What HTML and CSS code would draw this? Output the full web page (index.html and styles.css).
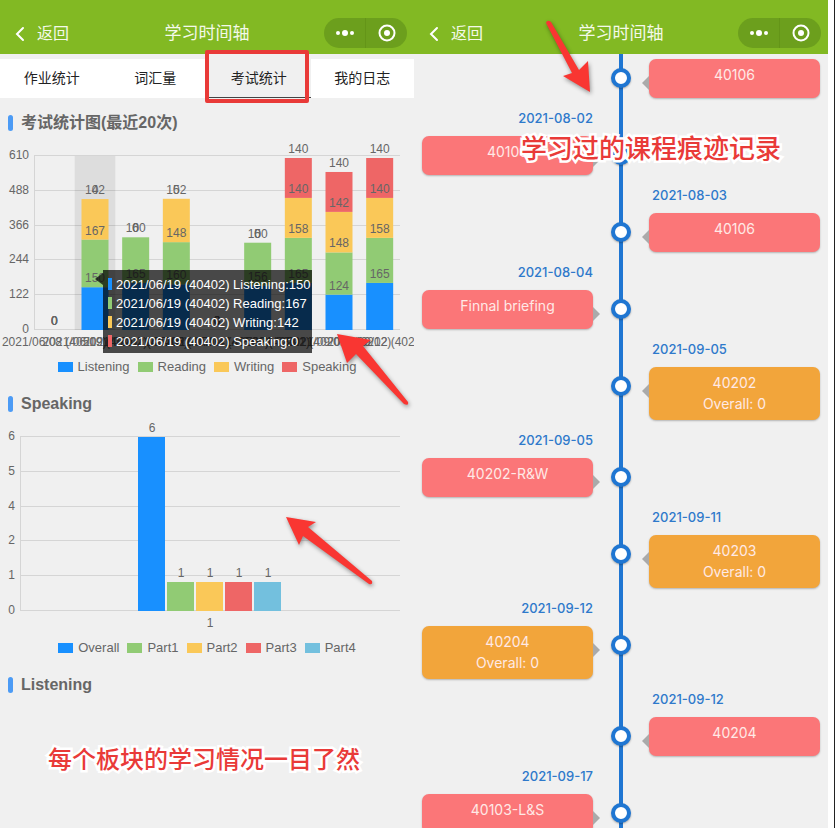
FILE: index.html
```html
<!DOCTYPE html>
<html lang="zh-CN">

<head>
    <meta charset="UTF-8">
    <meta name="viewport" content="width=device-width, initial-scale=1.0">
    <title>学习时间轴</title>
    <link rel="stylesheet" href="styles.css">
</head>

<body>
    <main class="phones">
        <!-- Statistics -->
        <section class="phone">
            <header class="navbar">
                <a class="back" href="#">
                    <svg width="10" height="16" viewBox="0 0 10 16"><path d="M8 2L2 8l6 6" /></svg>
                    返回
                </a>
                <h1>学习时间轴</h1>
                <div class="capsule">
                    <button type="button" aria-label="更多">
                        <svg width="20" height="8" viewBox="0 0 20 8"><circle cx="3" cy="4" r="2" /><circle cx="10" cy="4" r="3" /><circle cx="17" cy="4" r="2" /></svg>
                    </button>
                    <button type="button" aria-label="关闭">
                        <svg width="18" height="18" viewBox="0 0 18 18"><circle class="ring" cx="9" cy="9" r="7.5" /><circle cx="9" cy="9" r="3" /></svg>
                    </button>
                </div>
            </header>

            <nav class="tabs">
                <button type="button">作业统计</button>
                <button type="button">词汇量</button>
                <button type="button" class="active">考试统计</button>
                <button type="button">我的日志</button>
            </nav>

            <h2>考试统计图(最近20次)</h2>
            <svg class="chart" id="examChart" viewBox="0 0 414 214"></svg>
            <ul class="legend">
                <li class="blue">Listening</li>
                <li class="green">Reading</li>
                <li class="yellow">Writing</li>
                <li class="red">Speaking</li>
            </ul>

            <h2>Speaking</h2>
            <svg class="chart" id="speakingChart" viewBox="0 0 414 214"></svg>
            <ul class="legend">
                <li class="blue">Overall</li>
                <li class="green">Part1</li>
                <li class="yellow">Part2</li>
                <li class="red">Part3</li>
                <li class="cyan">Part4</li>
            </ul>

            <h2>Listening</h2>

            <!-- Notes over the screen -->
            <div class="mark-box"></div>
            <svg class="arrow arrow-exam" width="76" height="76" viewBox="0 0 76 76"><path d="M3 3L37 9L29 15L74 71Q75 75 70 73L22 23L13 32Z" /></svg>
            <svg class="arrow arrow-speaking" width="92" height="72" viewBox="0 0 92 72"><path d="M3 3L33 8L25 13L89 67Q90 71 86 70L20 22L16 31Z" /></svg>
            <p class="note note-stats">每个板块的学习情况一目了然</p>
        </section>

        <!-- Timeline -->
        <section class="phone">
            <header class="navbar">
                <a class="back" href="#">
                    <svg width="10" height="16" viewBox="0 0 10 16"><path d="M8 2L2 8l6 6" /></svg>
                    返回
                </a>
                <h1>学习时间轴</h1>
                <div class="capsule">
                    <button type="button" aria-label="更多">
                        <svg width="20" height="8" viewBox="0 0 20 8"><circle cx="3" cy="4" r="2" /><circle cx="10" cy="4" r="3" /><circle cx="17" cy="4" r="2" /></svg>
                    </button>
                    <button type="button" aria-label="关闭">
                        <svg width="18" height="18" viewBox="0 0 18 18"><circle class="ring" cx="9" cy="9" r="7.5" /><circle cx="9" cy="9" r="3" /></svg>
                    </button>
                </div>
            </header>

            <ol class="timeline">
                <li class="right"><span class="node"></span><div class="card">40106</div></li>
                <li class="left"><time>2021-08-02</time><span class="node"></span><div class="card">40106</div></li>
                <li class="right"><time>2021-08-03</time><span class="node"></span><div class="card">40106</div></li>
                <li class="left"><time>2021-08-04</time><span class="node"></span><div class="card">Finnal briefing</div></li>
                <li class="right"><time>2021-09-05</time><span class="node"></span><div class="card exam">40202<br>Overall: 0</div></li>
                <li class="left"><time>2021-09-05</time><span class="node"></span><div class="card">40202-R&amp;W</div></li>
                <li class="right"><time>2021-09-11</time><span class="node"></span><div class="card exam">40203<br>Overall: 0</div></li>
                <li class="left"><time>2021-09-12</time><span class="node"></span><div class="card exam">40204<br>Overall: 0</div></li>
                <li class="right"><time>2021-09-12</time><span class="node"></span><div class="card">40204</div></li>
                <li class="left"><time>2021-09-17</time><span class="node"></span><div class="card">40103-L&amp;S</div></li>
            </ol>

            <svg class="arrow arrow-timeline" width="52" height="78" viewBox="0 0 52 78"><path d="M3 6Q4 2 8 5L36 53L45 44L47 75L20 59L29 56Z" /></svg>
            <p class="note note-timeline">学习过的课程痕迹记录</p>
        </section>
    </main>

    <script src="charts.js"></script>
</body>

</html>
```

FILE: styles.css
```css
* {
    box-sizing: border-box;
}

body {
    margin: 0;
    background-color: #fff;
    font-family: "Liberation Sans", "Noto Sans CJK SC", sans-serif;
    color: #666;
}

h1,
h2,
p,
ul,
ol {
    margin: 0;
    padding: 0;
    list-style: none;
}

button {
    border: none;
    padding: 0;
    background: none;
    font-family: inherit;
    cursor: pointer;
}

.phones {
    display: grid;
    grid-template-columns: 1fr 1fr;
    height: 100vh;
    padding-right: 6px;
    border-right: 1px solid #222;
}

.phone {
    position: relative;
    display: flex;
    flex-direction: column;
    min-width: 0;
    overflow: hidden;
    background-color: #f0f0f0;
}

/* Top bar */
.navbar {
    display: grid;
    grid-template-columns: 1fr auto 1fr;
    align-items: center;
    flex-shrink: 0;
    padding: 18px 7px 6px;
    background-color: #82b923;
    color: #f4f9e9;
}

.navbar h1 {
    padding-top: 2px;
    font-size: 17px;
    line-height: 28px;
    font-weight: normal;
}

.back {
    display: flex;
    align-items: center;
    gap: 12px;
    padding: 2px 0 0 8px;
    color: inherit;
    font-size: 16px;
    line-height: 28px;
    text-decoration: none;
}

.back path {
    fill: none;
    stroke: #fff;
    stroke-width: 2;
    stroke-linecap: round;
}

.capsule {
    justify-self: end;
    display: flex;
    width: 83px;
    height: 30px;
    border-radius: 15px;
    background-color: #6c9f1d;
}

.capsule button {
    flex: 1;
    display: flex;
    align-items: center;
    justify-content: center;
}

.capsule button + button {
    border-left: 1px solid #649518;
}

.capsule circle {
    fill: #fff;
}

.capsule .ring {
    fill: none;
    stroke: #fff;
    stroke-width: 2;
}

/* Tabs */
.tabs {
    display: flex;
    flex-shrink: 0;
    height: 39px;
    margin-top: 5px;
}

.tabs button {
    flex: 1;
    padding-bottom: 3px;
    background-color: #fff;
    color: #222;
    font-size: 14px;
}

.tabs .active {
    padding-bottom: 2px;
    background-color: #f0f0f0;
    border-bottom: 1px solid #444;
}

/* Charts */
h2 {
    display: flex;
    align-items: center;
    flex-shrink: 0;
    gap: 8px;
    padding: 14px 8px 6px;
    font-size: 16px;
    line-height: 22px;
}

h2::before {
    content: "";
    width: 5px;
    height: 16px;
    border-radius: 3px;
    background-color: #4c9bf5;
}

.chart {
    display: block;
    flex-shrink: 0;
    width: 100%;
    font-size: 12px;
    fill: #666;
}

.chart .grid {
    stroke: #d5d5d5;
    fill: none;
}

.chart .tip text {
    fill: #fff;
    font-size: 13px;
}

.legend {
    display: flex;
    flex-shrink: 0;
    justify-content: center;
    gap: 8px;
    font-size: 13px;
    line-height: 25px;
}

.legend li {
    display: flex;
    align-items: center;
    gap: 5px;
}

.legend li::before {
    content: "";
    width: 15px;
    height: 10px;
    background-color: var(--color);
}

.blue { --color: #1890ff; }
.green { --color: #91cb74; }
.yellow { --color: #fac858; }
.red { --color: #ee6666; }
.cyan { --color: #73c0de; }

/* Timeline */
.timeline {
    position: relative;
    flex: 1;
    min-height: 0;
    padding: 5px 8px 0;
    font-family: Inter, "Noto Sans CJK SC", sans-serif;
}

.timeline::before {
    content: "";
    position: absolute;
    top: 0;
    bottom: 0;
    left: 50%;
    width: 4px;
    margin-left: -2px;
    background-color: #1f76d2;
}

.timeline li {
    position: relative;
    display: grid;
    grid-template-columns: 1fr 56px 1fr;
    align-items: start;
}

.timeline time {
    grid-row: 1;
    padding: 10px 0 8px;
    color: #2e79cb;
    font-size: 13px;
    line-height: 20px;
    font-weight: 500;
}

.node {
    grid-row: 2;
    grid-column: 2;
    justify-self: center;
    width: 20px;
    height: 20px;
    margin-top: 9px;
    border: 4px solid #1f76d2;
    border-radius: 50%;
    background-color: #fff;
    box-shadow: 0 1px 2px rgba(0, 0, 0, 0.3);
}

.card {
    position: relative;
    grid-row: 2;
    min-height: 39px;
    padding: 5px 0 6px;
    border-radius: 7px;
    background-color: #fb7678;
    box-shadow: 0 1px 2px rgba(0, 0, 0, 0.25);
    color: #ffe9e6;
    font-size: 14px;
    line-height: 21px;
    text-align: center;
}

.card.exam {
    background-color: #f2a53b;
}

.card::after {
    content: "";
    position: absolute;
    top: 17px;
    border: 7px solid transparent;
}

.left time,
.left .card {
    grid-column: 1;
}

.left time {
    text-align: right;
}

.right time,
.right .card {
    grid-column: 3;
}

.right time {
    padding-left: 3px;
}

.left .card::after {
    left: 100%;
    border-left-color: #aaa;
    border-right-width: 0;
}

.right .card::after {
    right: 100%;
    border-right-color: #aaa;
    border-left-width: 0;
}

/* Red notes */
.mark-box {
    position: absolute;
    top: 50px;
    left: 205px;
    width: 104px;
    height: 53px;
    border: 4px solid #e93a38;
    border-radius: 2px;
}

.arrow {
    position: absolute;
    overflow: visible;
    fill: #f93632;
    filter: drop-shadow(1px 2px 2px rgba(0, 0, 0, 0.4));
}

.arrow-exam {
    top: 331px;
    left: 334px;
}

.arrow-speaking {
    top: 514px;
    left: 283px;
}

.arrow-timeline {
    top: 17px;
    left: 129px;
}

.note {
    position: absolute;
    color: #e93a38;
    font-weight: 500;
    white-space: nowrap;
    paint-order: stroke fill;
    -webkit-text-stroke: 5px #fff;
}

.note-stats {
    top: 742px;
    left: 48px;
    font-size: 24px;
    line-height: 36px;
}

.note-timeline {
    top: 131px;
    left: 107px;
    font-size: 26px;
    line-height: 36px;
}
```

FILE: charts.js
```js
const COLORS = ["#1890ff", "#91cb74", "#fac858", "#ee6666", "#73c0de"];
const TOP = 16;
const BOTTOM = 190;
const RIGHT = 400;

function rect(x, y, width, height, color) {
    return `<rect x="${x}" y="${y}" width="${width}" height="${height}" fill="${color}" />`;
}

function label(x, y, text, anchor = "middle") {
    return `<text x="${x}" y="${y}" text-anchor="${anchor}">${text}</text>`;
}

// Horizontal lines, left axis and its numbers
function drawGrid(left, ticks) {
    let step = (BOTTOM - TOP) / (ticks.length - 1);
    let out = "";
    ticks.forEach((tick, i) => {
        let y = Math.round(TOP + step * i) - 0.5;
        out += `<path class="grid" d="M${left} ${y}H${RIGHT}" />`;
        out += label(left - 5, y + 3, tick, "end");
    });
    return out + `<path class="grid" d="M${left + 0.5} ${TOP}V${BOTTOM}" />`;
}

function drawExamChart() {
    let left = 34;
    let data = [
        ["2021/06/08 (40509)", [0, 0, 0, 0]],
        ["2021/06/19 (40402)", [150, 167, 142, 0]],
        ["2021/06/21 (40403)", [165, 160, 0, 0]],
        ["2021/07/05 (40404)", [160, 148, 152, 0]],
        ["2021/07/11 (40501)", [0, 0, 0, 0]],
        ["2021/08/02 (40502)", [156, 150, 0, 0]],
        ["2021/08/21 (40201)", [165, 158, 140, 140]],
        ["2021/09/05 (40202)", [124, 148, 142, 140]],
        ["2021/09/12 (40203)", [165, 158, 140, 140]]
    ];
    let step = (RIGHT - left) / data.length;
    let scale = (BOTTOM - TOP) / 610;
    let bars = "";
    let texts = "";

    data.forEach(([name, values], i) => {
        let center = left + step * (i + 0.5);
        let y = BOTTOM;
        values.forEach((value, n) => {
            y -= value * scale;
            bars += rect(center - 13.5, y, 27, value * scale, COLORS[n]);
            texts += label(center, y - 5, value);
        });
        texts += label(center, 206, name);
    });

    let tip = `<g class="tip"><path d="M95 139L103 133V145Z" fill="#000" fill-opacity="0.7" />`;
    tip += `<rect x="103" y="130" width="209" height="83" fill="#000" fill-opacity="0.7" />`;
    ["Listening:150", "Reading:167", "Writing:142", "Speaking:0"].forEach((text, i) => {
        let y = 138 + i * 19;
        tip += rect(108, y, 4, 12, COLORS[i]);
        tip += label(116, y + 11, "2021/06/19 (40402) " + text, "start");
    });
    tip += "</g>";

    document.getElementById("examChart").innerHTML =
        drawGrid(left, [610, 488, 366, 244, 122, 0]) +
        rect(left + step, TOP, step, BOTTOM - TOP, "rgba(0, 0, 0, 0.08)") +
        bars + texts + tip;
}

function drawSpeakingChart() {
    let left = 20;
    let values = [6, 1, 1, 1, 1];
    let scale = (BOTTOM - TOP) / 6;
    let center = (left + RIGHT) / 2;
    let out = drawGrid(left, [6, 5, 4, 2, 1, 0]);

    values.forEach((value, i) => {
        let x = center + (i - 2) * 29;
        let y = BOTTOM - value * scale;
        out += rect(x - 14, y, 27, value * scale, COLORS[i]);
        out += label(x, y - 5, value);
    });
    out += label(center, 206, "1");

    document.getElementById("speakingChart").innerHTML = out;
}

drawExamChart();
drawSpeakingChart();
```
